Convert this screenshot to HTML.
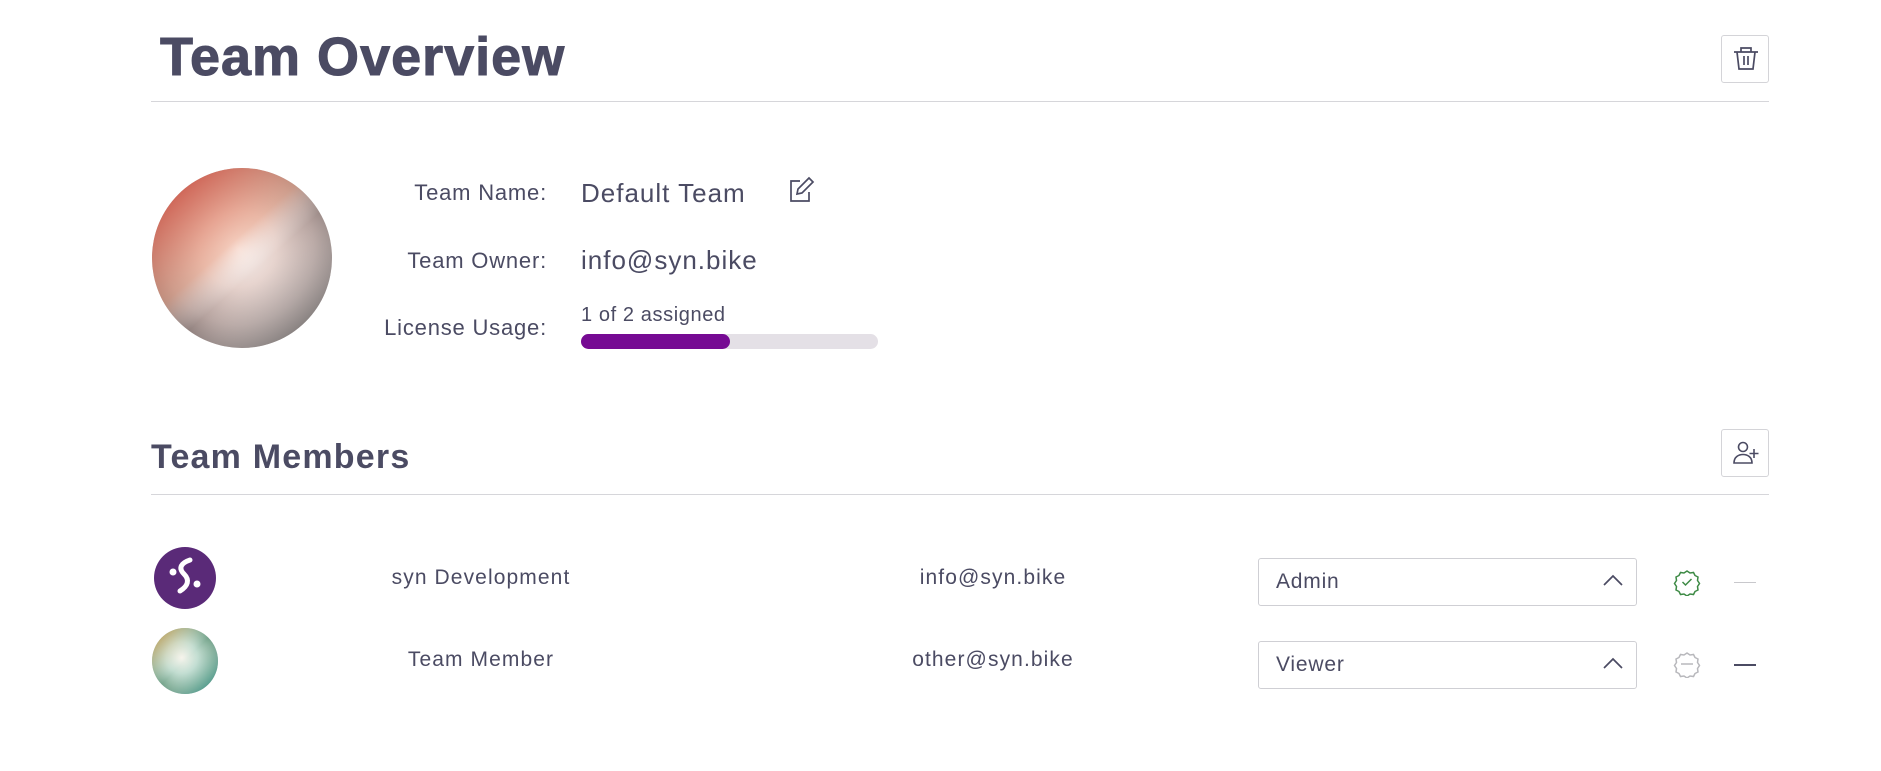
<!DOCTYPE html>
<html><head><meta charset="utf-8"><style>
*{margin:0;padding:0;box-sizing:border-box}
body{width:1881px;height:771px;background:#fff;font-family:"Liberation Sans",sans-serif;color:#4b4b63;position:relative;overflow:hidden}
.a{position:absolute}
.hr{position:absolute;left:151px;width:1618px;height:1px;background:#d6d6da}
.btn{position:absolute;left:1721px;width:48px;height:48px;border:1px solid #d4d4d8;border-radius:3px;background:#fff}
.lbl{position:absolute;right:1334px;font-size:22px;letter-spacing:.8px;color:#4b4b63;white-space:nowrap}
.sel{position:absolute;left:1258px;width:379px;height:48px;border:1px solid #cfcfd4;border-radius:3px;font-size:21px;padding-left:17px;line-height:46px;letter-spacing:.8px}
.sel svg{position:absolute;right:12px;top:14px}
.ctr{position:absolute;transform:translateX(-50%);font-size:21px;letter-spacing:1.1px;white-space:nowrap}
</style></head><body>
<div class="a" style="left:160px;top:26px;font-size:54px;font-weight:bold;letter-spacing:1px;-webkit-text-stroke:1px #4b4b63">Team Overview</div>
<div class="hr" style="top:101px"></div>
<div class="btn" style="top:35px"><svg width="48" height="48" viewBox="0 0 48 48" fill="none" stroke="#4b4b63" stroke-width="1.7"><path d="M12 16h24M19 16v-4h10v4M15 16l2 17h14l2-17M22 20v9M26 20v9"/></svg></div>

<svg class="a" style="left:152px;top:168px" width="180" height="180" viewBox="0 0 180 180">
<defs><radialGradient id="g" cx="0.48" cy="0.45" r="0.6"><stop offset="0" stop-color="#fbf6f4"/><stop offset="0.35" stop-color="#e6d2cc"/><stop offset="0.7" stop-color="#b5a29e"/><stop offset="1" stop-color="#7a6c6a"/></radialGradient>
<linearGradient id="h" x1="0" y1="0" x2="0.9" y2="1"><stop offset="0" stop-color="#d03a30" stop-opacity=".95"/><stop offset=".45" stop-color="#ee9a7a" stop-opacity=".45"/><stop offset=".6" stop-color="#fff" stop-opacity="0"/><stop offset="1" stop-color="#606060" stop-opacity=".75"/></linearGradient></defs>
<circle cx="90" cy="90" r="90" fill="url(#g)"/><circle cx="90" cy="90" r="90" fill="url(#h)"/></svg>

<div class="lbl" style="top:180px">Team Name:</div>
<div class="lbl" style="top:248px">Team Owner:</div>
<div class="lbl" style="top:315px">License Usage:</div>
<div class="a" style="left:581px;top:178px;font-size:26px;letter-spacing:1px">Default Team</div>
<svg class="a" style="left:786px;top:175px" width="30" height="30" viewBox="0 0 30 30" fill="none" stroke="#4b4b63" stroke-width="1.7"><path d="M14 6H5v20h18v-9"/><path d="M11 19l1-5L23 3l4 4-11 11z"/></svg>
<div class="a" style="left:581px;top:245px;font-size:26px;letter-spacing:1px">info@syn.bike</div>
<div class="a" style="left:581px;top:304px;font-size:20px;letter-spacing:.6px">1 of 2 assigned</div>
<div class="a" style="left:581px;top:334px;width:297px;height:15px;border-radius:8px;background:#e4e0e6"></div>
<div class="a" style="left:581px;top:334px;width:149px;height:15px;border-radius:8px;background:#760a93"></div>

<div class="a" style="left:151px;top:438px;font-size:34px;font-weight:bold;letter-spacing:1.2px">Team Members</div>
<div class="hr" style="top:494px"></div>
<div class="btn" style="top:429px"><svg width="48" height="48" viewBox="0 0 48 48" fill="none" stroke="#4b4b63" stroke-width="1.6"><circle cx="21" cy="17" r="4.5"/><path d="M12 33c0-6 4.5-8.5 9-8.5s9 2.5 9 8.5z"/><path d="M32 19v9M27.5 23.5h9"/></svg></div>

<svg class="a" style="left:154px;top:547px" width="62" height="62" viewBox="0 0 62 62"><circle cx="31" cy="31" r="31" fill="#5a2a78"/><path d="M36 13c-9 3-12 8-6 14s4 12-4 17" stroke="#fff" stroke-width="5" fill="none" stroke-linecap="round"/><circle cx="19" cy="25" r="3.5" fill="#fff"/><circle cx="43" cy="37" r="3.5" fill="#fff"/></svg>
<div class="ctr" style="left:481px;top:566px">syn Development</div>
<div class="ctr" style="left:993px;top:566px">info@syn.bike</div>
<div class="sel" style="top:558px">Admin<svg width="22" height="14" viewBox="0 0 22 14" fill="none" stroke="#4b4b63" stroke-width="1.7"><path d="M2 12l9-9 9 9"/></svg></div>
<svg class="a" style="left:1673px;top:568px" width="28" height="28" viewBox="0 0 28 28" fill="none" stroke="#3d8a45" stroke-width="1.5"><path d="M14 3l3 2 3.5-.5 1.5 3 3 1.5-.5 3.5 2 3-2 3 .5 3.5-3 1.5-1.5 3-3.5-.5-3 2-3-2-3.5.5-1.5-3-3-1.5.5-3.5-2-3 2-3-.5-3.5 3-1.5 1.5-3 3.5.5z"/><path d="M9.5 14l3 3 6-6"/></svg>
<div class="a" style="left:1734px;top:582px;width:22px;height:1px;background:#c8c8cc"></div>

<svg class="a" style="left:152px;top:628px" width="66" height="66" viewBox="0 0 66 66"><defs><radialGradient id="k" cx=".45" cy=".45" r=".6"><stop offset="0" stop-color="#f6f4ec"/><stop offset=".4" stop-color="#c0dccf"/><stop offset=".8" stop-color="#7aa890"/><stop offset="1" stop-color="#5a8a78"/></radialGradient><linearGradient id="m" x1="0" y1="0" x2="1" y2="1"><stop offset="0" stop-color="#d08a20" stop-opacity=".9"/><stop offset=".5" stop-color="#fff" stop-opacity="0"/><stop offset="1" stop-color="#108878" stop-opacity=".8"/></linearGradient></defs><circle cx="33" cy="33" r="33" fill="url(#k)"/><circle cx="33" cy="33" r="33" fill="url(#m)"/></svg>
<div class="ctr" style="left:481px;top:648px">Team Member</div>
<div class="ctr" style="left:993px;top:648px">other@syn.bike</div>
<div class="sel" style="top:641px">Viewer<svg width="22" height="14" viewBox="0 0 22 14" fill="none" stroke="#4b4b63" stroke-width="1.7"><path d="M2 12l9-9 9 9"/></svg></div>
<svg class="a" style="left:1673px;top:650px" width="28" height="28" viewBox="0 0 28 28" fill="none" stroke="#b8b8bc" stroke-width="1.5"><path d="M14 3l3 2 3.5-.5 1.5 3 3 1.5-.5 3.5 2 3-2 3 .5 3.5-3 1.5-1.5 3-3.5-.5-3 2-3-2-3.5.5-1.5-3-3-1.5.5-3.5-2-3 2-3-.5-3.5 3-1.5 1.5-3 3.5.5z"/><path d="M8 14h12"/></svg>
<div class="a" style="left:1734px;top:664px;width:22px;height:2px;background:#4b4b63"></div>
</body></html>
